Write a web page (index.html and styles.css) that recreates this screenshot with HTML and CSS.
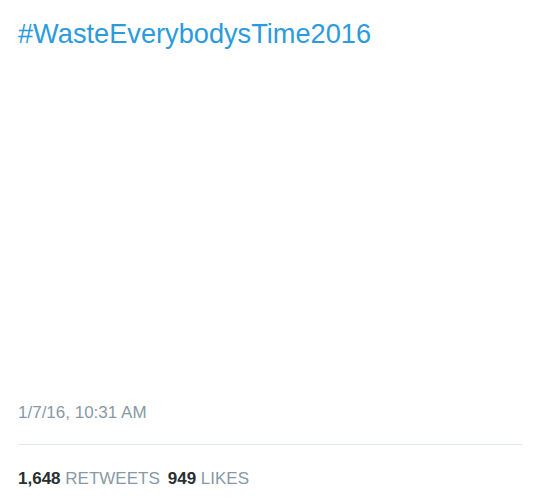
FILE: index.html
```html
<html lang="en">
<head>
    <meta charset="UTF-8">
    <meta name="viewport" content="width=device-width, initial-scale=1.0">
    <title>Tweet</title>
    <link rel="stylesheet" href="styles.css">
</head>
<body>
    <div class="tweet">
        <div class="tweet-text"><a class="hashtag" href="#">#WasteEverybodysTime2016</a></div>
        <div class="tweet-media"></div>
        <div class="tweet-date">1/7/16, 10:31 AM</div>
        <div class="tweet-stats">
            <span class="stat"><b>1,648</b> RETWEETS</span>
            <span class="stat"><b>949</b> LIKES</span>
        </div>
    </div>
</body>
</html>
```

FILE: styles.css
```css
body {
    font-family: "Liberation Sans", Arial, sans-serif;
    background-color: #fff;
    margin: 0;
    padding: 0;
}
.tweet {
    padding: 0 18px;
}
.tweet-text {
    padding-top: 16px;
    font-size: 27.2px;
    line-height: 36px;
}
.hashtag {
    color: #2b9bde;
    text-decoration: none;
}
.tweet-media {
    height: 350px;
}
.tweet-date {
    font-size: 17px;
    line-height: 22px;
    color: #8899a6;
    padding-bottom: 20px;
    border-bottom: 1px solid #e1e8ed;
}
.tweet-stats {
    display: flex;
    gap: 8px;
    padding-top: 23px;
    font-size: 17px;
    line-height: 22px;
    color: #8899a6;
}
.stat b {
    color: #292f33;
}
```
